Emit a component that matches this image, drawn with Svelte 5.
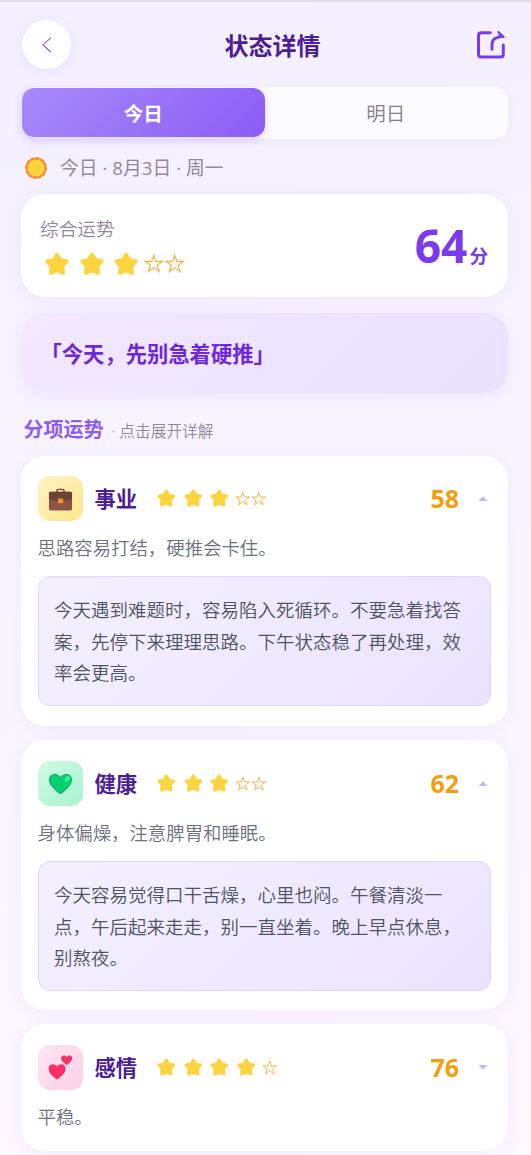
<script lang="ts">
	type Item = {
		key: string;
		name: string;
		stars: number;
		score: number;
		summary: string;
		detail: string;
		open: boolean;
	};

	const tabs = ['今日', '明日'];
	let activeTab = $state(0);

	const overall = { stars: 3, score: 64 };

	let items = $state<Item[]>([
		{
			key: 'career',
			name: '事业',
			stars: 3,
			score: 58,
			summary: '思路容易打结，硬推会卡住。',
			detail: '今天遇到难题时，容易陷入死循环。不要急着找答案，先停下来理理思路。下午状态稳了再处理，效率会更高。',
			open: true
		},
		{
			key: 'health',
			name: '健康',
			stars: 3,
			score: 62,
			summary: '身体偏燥，注意脾胃和睡眠。',
			detail: '今天容易觉得口干舌燥，心里也闷。午餐清淡一点，午后起来走走，别一直坐着。晚上早点休息，别熬夜。',
			open: true
		},
		{
			key: 'love',
			name: '感情',
			stars: 4,
			score: 76,
			summary: '平稳。',
			detail: '',
			open: false
		}
	]);
</script>

{#snippet rating(count: number, large: boolean)}
	<div class="stars" class:large role="img" aria-label="{count} / 5">
		{#each Array(5) as _, i}
			{#if i < count}
				<svg class="star-full" viewBox="0 0 24 24">
					<path
						d="M12 2.8 15.2 8 21.5 9.2 17.3 14.1 18 20.8 12 18.2 6 20.8 6.7 14.1 2.5 9.2 8.8 8Z"
						fill="#fdd43f"
						stroke="#fdd43f"
						stroke-width="4"
						stroke-linejoin="round"
					/>
				</svg>
			{:else}
				<svg class="star-empty" viewBox="0 0 20 20">
					<path
						d="M10 1.4 12.1 7.6H18.7L13.4 11.5 15.4 17.8 10 13.9 4.6 17.8 6.6 11.5 1.3 7.6H7.9Z"
						fill="none"
						stroke="#fbb040"
						stroke-width="1.2"
					/>
				</svg>
			{/if}
		{/each}
	</div>
{/snippet}

<main class="page">
	<header class="topbar">
		<button class="back" aria-label="返回">
			<svg width="12" height="18" viewBox="0 0 12 18">
				<path d="M10 1.6 2 8.9 10 16.2" fill="none" stroke="#8b5cf6" stroke-width="1.2" />
			</svg>
		</button>
		<h1>状态详情</h1>
		<button class="share" aria-label="分享">
			<svg width="30" height="30" viewBox="0 0 30 30" fill="none" stroke="#7c3aed">
				<path
					d="M14.2 2.8H5.2Q2.5 2.8 2.5 5.5V24.2Q2.5 26.9 5.2 26.9H24.6Q27.3 26.9 27.3 24.2V15"
					stroke-width="3"
					stroke-linecap="round"
				/>
				<path d="M16 19.2V14.6Q16 8 22.8 7.2" stroke-width="3" stroke-linecap="round" />
				<path d="M22.4 2 27.6 7H22.6" stroke-width="2.2" stroke-linejoin="round" stroke-linecap="round" fill="#7c3aed" />
			</svg>
		</button>
	</header>

	<nav class="tabs">
		{#each tabs as tab, i}
			<button class="tab" class:active={i === activeTab} onclick={() => (activeTab = i)}>{tab}</button>
		{/each}
	</nav>

	<p class="date">
		<svg width="24" height="24" viewBox="0 0 24 24">
			<circle cx="12" cy="12" r="10.2" fill="#ff8b2c" />
			<circle cx="12" cy="12" r="9.8" fill="none" stroke="#ff8b2c" stroke-width="2.4" stroke-dasharray="2 3.13" stroke-linecap="round" />
			<circle cx="12" cy="12" r="8.6" fill="#fdd43f" />
		</svg>
		<span>今日 · 8月3日 · 周一</span>
	</p>

	<section class="card overall">
		<div>
			<p class="overall-label">综合运势</p>
			{@render rating(overall.stars, true)}
		</div>
		<p class="overall-score">{overall.score}<small>分</small></p>
	</section>

	<section class="quote">「今天，先别急着硬推」</section>

	<h2 class="section-title">分项运势<span>· 点击展开详解</span></h2>

	<div class="list">
		{#each items as item (item.key)}
			<article class="card item">
				<button class="item-head" onclick={() => (item.open = !item.open)}>
					<span class="icon {item.key}">
						{#if item.key === 'career'}
							<svg width="25" height="25" viewBox="0 0 26 26">
								<path d="M9.2 6.5V5.3Q9.2 3.5 11 3.5H15Q16.8 3.5 16.8 5.3V6.5" fill="none" stroke="#6d4534" stroke-width="1.5" />
								<rect x="1" y="6" width="24" height="19.5" rx="1.8" fill="#8d5545" />
								<path d="M1 7.8Q1 6 2.8 6H23.2Q25 6 25 7.8V13.7Q19 15.5 13 15.5 7 15.5 1 13.7Z" fill="#6b4334" />
								<rect x="10.3" y="13.1" width="5.4" height="4.8" rx="1" fill="#f59222" />
							</svg>
						{:else if item.key === 'health'}
							<svg width="25" height="25" viewBox="0 0 26 26">
								<path
									d="M13 24.3C5.5 18.5 1 14 1 9 1 5.3 3.7 3 7 3 9.7 3 12 4.4 13 6.6 14 4.4 16.3 3 19 3 22.3 3 25 5.3 25 9 25 14 20.5 18.5 13 24.3Z"
									fill="#0ba66f"
								/>
								<path
									d="M13 23C6.5 17.7 2 13.5 2 9.2 2 6.1 4.3 4.2 7.1 4.2 9.8 4.2 12 5.8 13 8 14 5.8 16.2 3.8 19 3.8 22 3.8 24.4 6 24.4 9.2 24.4 13.5 19.5 17.7 13 23Z"
									fill="#06d16c"
								/>
								<ellipse cx="20" cy="8.2" rx="2.2" ry="3.4" transform="rotate(35 20 8.2)" fill="#38f294" />
							</svg>
						{:else}
							<svg width="25" height="25" viewBox="0 0 26 26" fill="#fb2f60">
								<path
									d="M9.4 25.5C4 21.5 .6 18.1 .6 14.2 .6 11.3 2.6 9.6 5 9.6 7 9.6 8.7 10.6 9.4 12.4 10.2 10.6 11.9 9.6 13.9 9.6 16.3 9.6 18.3 11.3 18.3 14.2 18.3 18.1 14.9 21.5 9.4 25.5Z"
								/>
								<path
									d="M19.4 10.5C15.7 7.7 13.6 5.7 13.6 3.3 13.6 1.6 14.9 .6 16.4 .6 17.8 .6 18.9 1.3 19.4 2.4 19.9 1.3 21 .6 22.4 .6 23.9 .6 25.2 1.6 25.2 3.3 25.2 5.7 23.1 7.7 19.4 10.5Z"
								/>
							</svg>
						{/if}
					</span>
					<span class="name">{item.name}</span>
					{@render rating(item.stars, false)}
					<span class="score">{item.score}</span>
					<svg class="caret" class:open={item.open} viewBox="0 0 10 5">
						<path d="M.5 0H9.5L5 4.8Z" fill="#c4b5fd" />
					</svg>
				</button>
				<p class="summary">{item.summary}</p>
				{#if item.open}
					<p class="detail">{item.detail}</p>
				{/if}
			</article>
		{/each}
	</div>
</main>

<style>
	:global(body) {
		overflow: hidden;
	}

	.page {
		box-sizing: border-box;
		height: 1155px;
		overflow: hidden;
		padding: 18px 23px 0 21px;
		border-top: 2px solid #e2deea;
		background: linear-gradient(170deg, #f3efff 0%, #f8f4ff 45%, #fef7fe 100%);
		font-family: 'Open Sans', 'Noto Sans CJK SC', sans-serif;
		font-weight: 350;
		color: #4c1d95;
	}

	h1,
	h2,
	p {
		margin: 0;
	}

	button {
		padding: 0;
		border: 0;
		background: none;
		font: inherit;
		color: inherit;
	}

	svg {
		display: block;
		flex-shrink: 0;
	}

	.topbar {
		display: flex;
		align-items: center;
		justify-content: space-between;
		height: 49px;
		padding-left: 1px;
	}

	.back {
		display: grid;
		place-items: center;
		width: 49px;
		height: 49px;
		border-radius: 50%;
		background: #fff;
		box-shadow: 0 3px 12px rgba(139, 92, 246, 0.1);
	}

	h1 {
		margin: 3px 0 0 -2px;
		font-size: 24px;
		font-weight: 700;
		line-height: 34px;
	}

	.share {
		margin-right: 2px;
	}

	.tabs {
		display: flex;
		height: 52px;
		margin-top: 18px;
		border-radius: 13px;
		background: rgba(255, 255, 255, 0.7);
		box-shadow: 0 2px 8px rgba(139, 92, 246, 0.06);
	}

	.tab {
		flex: 1;
		margin: 1px 1px 2px 0;
		border-radius: 12px;
		font-size: 19.5px;
		color: #857a90;
	}

	.tab.active {
		margin: 1px 0 2px 1px;
		background: linear-gradient(135deg, #a78bfa, #8b5cf6);
		box-shadow: 0 3px 9px rgba(139, 92, 246, 0.25);
		font-weight: 700;
		color: #fff;
	}

	.date {
		display: flex;
		align-items: center;
		gap: 12px;
		height: 30px;
		margin-top: 14px;
		padding-left: 3px;
		font-size: 18.8px;
		font-weight: 400;
		color: #94879c;
	}

	.date span {
		margin-top: -2px;
	}

	.card {
		border-radius: 24px;
		background: #fff;
		box-shadow: 0 3px 16px rgba(139, 92, 246, 0.07);
	}

	.overall {
		display: flex;
		align-items: center;
		justify-content: space-between;
		box-sizing: border-box;
		height: 103px;
		margin-top: 11px;
		padding: 5px 20px 0 19px;
	}

	.overall-label {
		font-size: 18.7px;
		line-height: 28px;
		color: #94879c;
	}

	.overall-score {
		padding-top: 4px;
		font-size: 46px;
		font-weight: 700;
		line-height: 60px;
		color: #7c3aed;
	}

	.overall-score small {
		margin-left: 2px;
		font-size: 18.6px;
	}

	.stars {
		display: flex;
		align-items: center;
	}

	.star-full {
		width: 18.5px;
		height: 18.5px;
		margin-right: 8.2px;
	}

	.star-empty {
		width: 15.6px;
		height: 15.6px;
		margin-right: 0.7px;
	}

	.star-full + .star-empty {
		margin-left: -2.2px;
	}

	.large {
		height: 36px;
		margin: 3px 0 0 5px;
	}

	.large .star-full {
		width: 24px;
		height: 24px;
		margin-right: 10.5px;
	}

	.large .star-empty {
		width: 19.6px;
		height: 19.6px;
		margin-right: 1.2px;
	}

	.large .star-full + .star-empty {
		margin-left: -4.5px;
	}

	.quote {
		height: 80px;
		margin-top: 16px;
		padding-left: 19.5px;
		border-radius: 24px;
		background: linear-gradient(135deg, #f3e8ff, #ede4ff 50%, #ebe3fd);
		box-shadow: 0 3px 14px rgba(139, 92, 246, 0.09);
		font-size: 21.3px;
		font-weight: 700;
		line-height: 82px;
		color: #6d28d9;
	}

	.section-title {
		height: 31px;
		margin: 21px 0 11px 2.5px;
		font-size: 20px;
		font-weight: 700;
		line-height: 31px;
		color: #8b5cf6;
	}

	.section-title span {
		margin-left: 8px;
		font-size: 15.7px;
		font-weight: 350;
		color: #94879c;
	}

	.list {
		display: grid;
		gap: 14px;
	}

	.item {
		padding: 20px 17px 20px 16.5px;
	}

	.item + .item {
		padding-top: 21px;
		padding-bottom: 19px;
	}

	.item-head {
		display: flex;
		align-items: center;
		width: 100%;
		height: 45px;
	}

	.icon {
		display: grid;
		place-items: center;
		width: 45px;
		height: 45px;
		margin-right: 12px;
		border-radius: 12px;
	}

	.career {
		background: linear-gradient(135deg, #fef3c7, #fde68a);
	}

	.health {
		background: linear-gradient(135deg, #d1fae5, #a7f3d0);
	}

	.love {
		background: linear-gradient(135deg, #fce7f3, #fbcfe8);
	}

	.name {
		margin: -2px 20px 0 0;
		font-size: 21.3px;
		font-weight: 700;
	}

	.score {
		margin: -1px 0 0 auto;
		font-size: 25px;
		font-weight: 700;
		color: #f59e0b;
	}

	.caret {
		width: 10px;
		height: 5px;
		margin: 0 3.5px 0 18.5px;
	}

	.caret.open {
		margin-top: -1px;
		transform: rotate(180deg);
	}

	.summary {
		margin-top: 11px;
		font-size: 18.4px;
		line-height: 31px;
		color: #6b7280;
	}

	.detail {
		box-sizing: border-box;
		height: 130px;
		margin-top: 13px;
		padding: 17px 15px 17px 15.5px;
		border: 1px solid #e0d7fc;
		border-radius: 12px;
		background: linear-gradient(135deg, #f4f0ff, #ebe3fe);
		font-size: 18.5px;
		line-height: 31.5px;
		color: #4b5563;
	}
</style>
